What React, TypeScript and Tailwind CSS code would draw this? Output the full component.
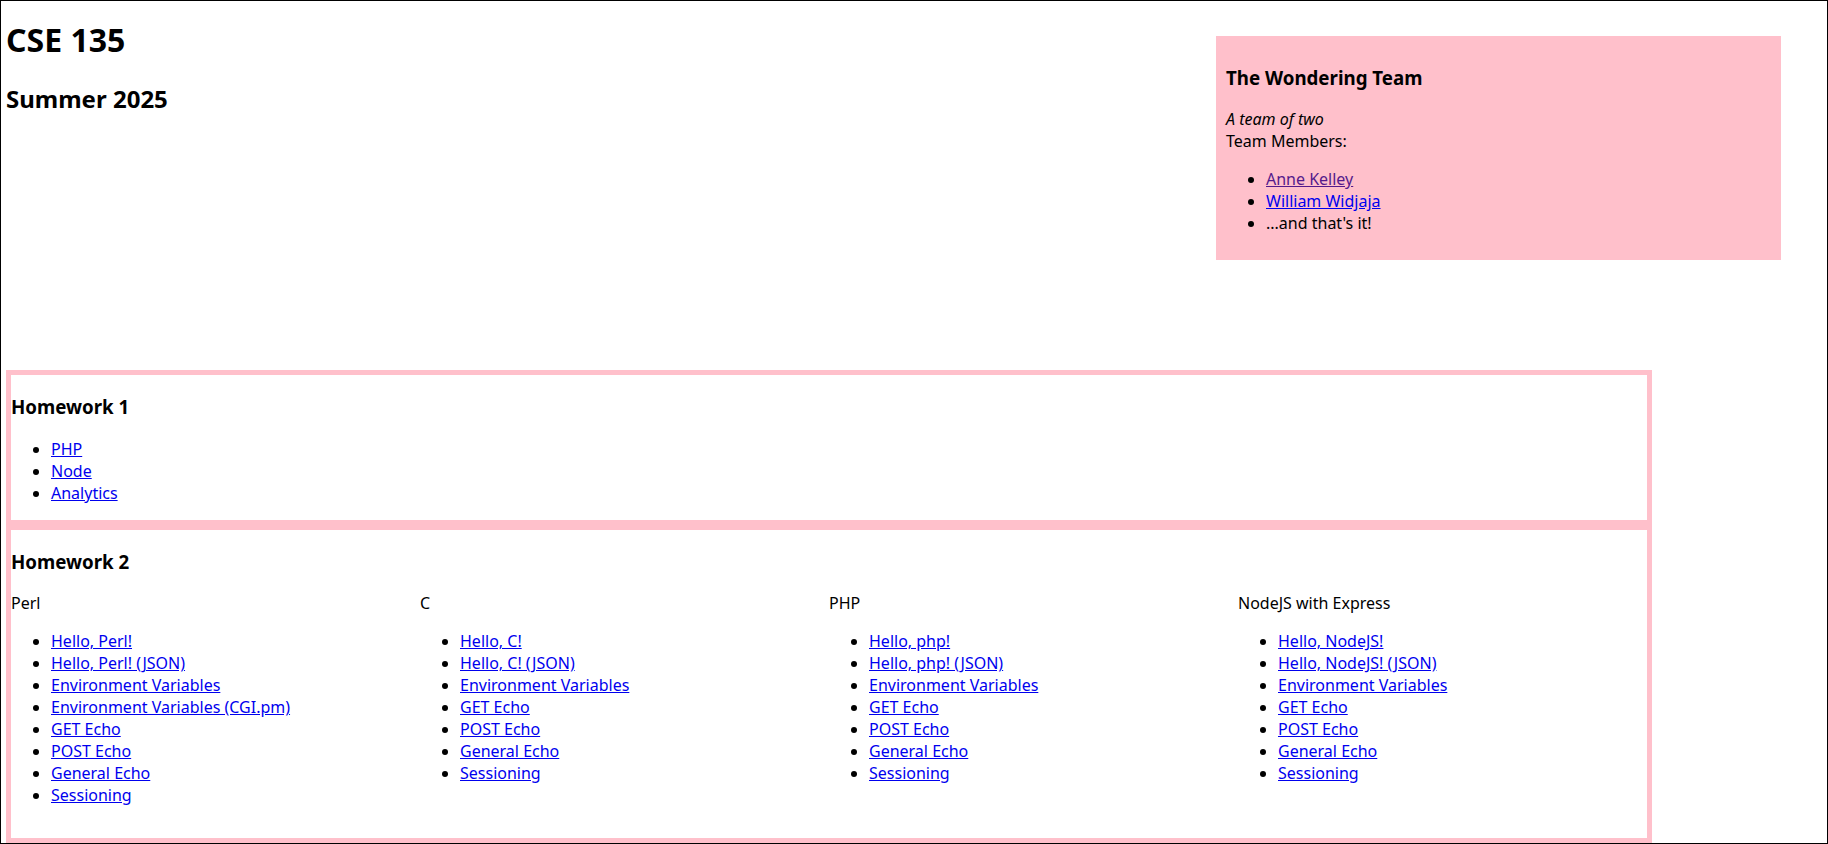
const homework1 = ["PHP", "Node", "Analytics"];

const common = ["Environment Variables", "GET Echo", "POST Echo", "General Echo", "Sessioning"];

const homework2 = [
  {
    name: "Perl",
    links: [
      "Hello, Perl!",
      "Hello, Perl! (JSON)",
      "Environment Variables",
      "Environment Variables (CGI.pm)",
      "GET Echo",
      "POST Echo",
      "General Echo",
      "Sessioning",
    ],
  },
  { name: "C", links: ["Hello, C!", "Hello, C! (JSON)", ...common] },
  { name: "PHP", links: ["Hello, php!", "Hello, php! (JSON)", ...common] },
  { name: "NodeJS with Express", links: ["Hello, NodeJS!", "Hello, NodeJS! (JSON)", ...common] },
];

function Link({ children, visited }: { children: React.ReactNode; visited?: boolean }) {
  return (
    <a
      href="#"
      className={visited ? "text-[#551A8B] underline" : "text-[#0000EE] underline"}
    >
      {children}
    </a>
  );
}

export default function App() {
  return (
    <div className="min-h-screen border border-black bg-white px-[5px] text-[16px] leading-[normal] text-black font-['Noto_Sans',sans-serif]">
      <header className="flex items-start justify-between">
        <div>
          <h1 className="mt-[17px] mb-[21.44px] text-[32px] font-bold">CSE 135</h1>
          <h2 className="text-[24px] font-bold">Summer 2025</h2>
        </div>
        <aside className="mt-[35px] mr-[41px] w-[565px] bg-[#FFC0CB] px-[10px] py-[10px]">
          <h3 className="my-[18.72px] text-[18.72px] font-bold">The Wondering Team</h3>
          <p className="my-4">
            <em>A team of two</em>
            <br />
            Team Members:
          </p>
          <ul className="my-4 list-disc pl-10">
            <li>
              <Link visited>Anne Kelley</Link>
            </li>
            <li>
              <Link>William Widjaja</Link>
            </li>
            <li>...and that's it!</li>
          </ul>
        </aside>
      </header>

      <main className="mt-[110px] w-[1646px]">
        <section className="border-[5px] border-[#FFC0CB]">
          <h3 className="my-[18.72px] text-[18.72px] font-bold">Homework 1</h3>
          <ul className="my-4 list-disc pl-10">
            {homework1.map((h) => (
              <li key={h}>
                <Link>{h}</Link>
              </li>
            ))}
          </ul>
        </section>

        <section className="border-[5px] border-[#FFC0CB] pb-[16px]">
          <h3 className="my-[18.72px] text-[18.72px] font-bold">Homework 2</h3>
          <div className="grid grid-cols-4">
            {homework2.map((lang) => (
              <div key={lang.name}>
                <p className="mb-4">{lang.name}</p>
                <ul className="mb-4 list-disc pl-10">
                  {lang.links.map((l) => (
                    <li key={l}>
                      <Link>{l}</Link>
                    </li>
                  ))}
                </ul>
              </div>
            ))}
          </div>
        </section>
      </main>
    </div>
  );
}
